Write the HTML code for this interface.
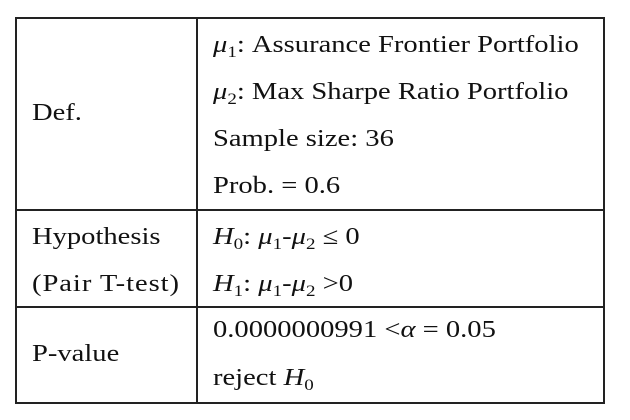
<!DOCTYPE html>
<html><head><meta charset="utf-8"><style>
body{margin:0;width:630px;height:420px;background:#fff;position:relative;overflow:hidden;font-family:"Liberation Serif",serif;color:#111;}
.l{position:absolute;background:#222;}
.t{position:absolute;font-size:24px;line-height:28px;white-space:nowrap;transform:scaleX(1.19);transform-origin:left center;}
i{font-style:italic}
sub{font-size:16px;vertical-align:-5px;line-height:0}
</style></head><body>
<div class="l" style="left:15px;top:17px;width:590px;height:1.5px"></div>
<div class="l" style="left:15px;top:209px;width:590px;height:1.5px"></div>
<div class="l" style="left:15px;top:306px;width:590px;height:1.5px"></div>
<div class="l" style="left:15px;top:402px;width:590px;height:1.5px"></div>
<div class="l" style="left:15px;top:17px;width:1.5px;height:387px"></div>
<div class="l" style="left:196px;top:17px;width:1.5px;height:387px"></div>
<div class="l" style="left:603px;top:17px;width:1.5px;height:387px"></div>

<div class="t" style="left:32px;top:99px">Def.</div>
<div class="t" style="left:213px;top:31px"><i>μ</i><sub>1</sub>: Assurance Frontier Portfolio</div>
<div class="t" style="left:213px;top:78px"><i>μ</i><sub>2</sub>: Max Sharpe Ratio Portfolio</div>
<div class="t" style="left:213px;top:125px">Sample size: 36</div>
<div class="t" style="left:213px;top:172px">Prob. = 0.6</div>

<div class="t" style="left:32px;top:223px">Hypothesis</div>
<div class="t" style="left:32px;top:270px;letter-spacing:0.8px">(Pair T-test)</div>
<div class="t" style="left:213px;top:223px"><i>H</i><sub>0</sub>: <i>μ</i><sub>1</sub>-<i>μ</i><sub>2</sub> ≤ 0</div>
<div class="t" style="left:213px;top:270px"><i>H</i><sub>1</sub>: <i>μ</i><sub>1</sub>-<i>μ</i><sub>2</sub> &gt;0</div>

<div class="t" style="left:32px;top:340px">P-value</div>
<div class="t" style="left:213px;top:316px">0.0000000991 &lt;<i>α</i> = 0.05</div>
<div class="t" style="left:213px;top:364px">reject <i>H</i><sub>0</sub></div>
</body></html>
